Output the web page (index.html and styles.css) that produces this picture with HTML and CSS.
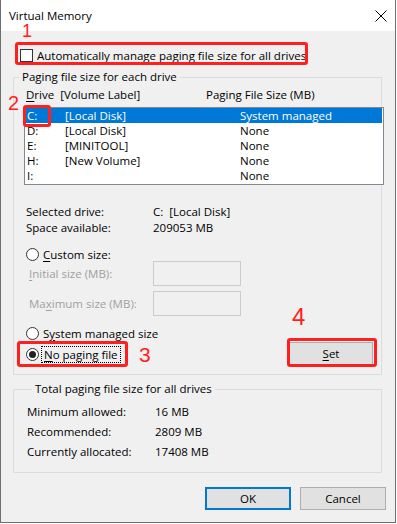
FILE: index.html
```html
<!DOCTYPE html>
<html lang="en">
  <head>
    <meta charset="UTF-8" />
    <title>Virtual Memory</title>
    <link rel="stylesheet" href="styles.css">
  </head>
  <body>
    <div class="window">
      <header class="titlebar">
        <span class="title-text">Virtual Memory</span>
        <svg class="close" width="12" height="12" viewBox="0 0 12 12">
          <path d="M0.5 0.5 L11.5 11.5 M11.5 0.5 L0.5 11.5" stroke="#000" stroke-width="1" fill="none" />
        </svg>
      </header>

      <div class="content">
        <div class="check-row">
          <span class="checkbox"></span>
          <span><u>A</u>utomatically manage paging file size for all drives</span>
        </div>

        <fieldset class="group drives">
          <legend>Paging file size for each drive</legend>
          <div class="list-head">
            <span class="head-drive"><u>D</u>rive&nbsp; [Volume Label]</span>
            <span>Paging File Size (MB)</span>
          </div>
          <div class="listbox">
            <div class="row selected"><span class="c1">C:</span><span class="c2">[Local Disk]</span><span>System managed</span></div>
            <div class="row"><span class="c1">D:</span><span class="c2">[Local Disk]</span><span>None</span></div>
            <div class="row"><span class="c1">E:</span><span class="c2">[MINITOOL]</span><span>None</span></div>
            <div class="row"><span class="c1">H:</span><span class="c2">[New Volume]</span><span>None</span></div>
            <div class="row"><span class="c1">I:</span><span class="c2"></span><span>None</span></div>
          </div>

          <div class="info">
            <div class="info-row"><span class="info-label">Selected drive:</span><span>C:&nbsp; [Local Disk]</span></div>
            <div class="info-row"><span class="info-label">Space available:</span><span>209053 MB</span></div>
          </div>

          <div class="radio-row custom">
            <span class="radio"></span>
            <span><u>C</u>ustom size:</span>
          </div>
          <div class="field-row">
            <span class="field-label"><u>I</u>nitial size (MB):</span>
            <span class="textbox"></span>
          </div>
          <div class="field-row second">
            <span class="field-label">Ma<u>x</u>imum size (MB):</span>
            <span class="textbox"></span>
          </div>

          <div class="radio-row system">
            <span class="radio"></span>
            <span>S<u>y</u>stem managed size</span>
          </div>
          <div class="bottom-row">
            <div class="radio-row">
              <span class="radio checked"></span>
              <span class="focus"><u>N</u>o paging file</span>
            </div>
            <button class="btn set"><u>S</u>et</button>
          </div>
        </fieldset>

        <fieldset class="group total">
          <legend>Total paging file size for all drives</legend>
          <div class="total-row"><span class="total-label">Minimum allowed:</span><span>16 MB</span></div>
          <div class="total-row"><span class="total-label">Recommended:</span><span>2809 MB</span></div>
          <div class="total-row"><span class="total-label">Currently allocated:</span><span>17408 MB</span></div>
        </fieldset>

        <div class="actions">
          <button class="btn ok">OK</button>
          <button class="btn">Cancel</button>
        </div>
      </div>

      <!-- annotations drawn over the dialog -->
      <span class="mark mark-1">1</span>
      <span class="mark mark-2">2</span>
      <span class="mark mark-3">3</span>
      <span class="mark mark-4">4</span>
      <div class="hl hl-1"></div>
      <div class="hl hl-2"></div>
      <div class="hl hl-3"></div>
      <div class="hl hl-4"></div>
    </div>
  </body>
</html>
```

FILE: styles.css
```css
* {
  margin: 0;
  padding: 0;
  box-sizing: border-box;
}
body {
  background: #fff;
  font-family: 'Open Sans', 'Noto Sans', sans-serif;
  font-size: 11.5px;
  color: #000;
}
u {
  text-decoration: underline;
  text-underline-offset: 2px;
}
.window {
  position: relative;
  width: 396px;
  height: 523px;
  border: 1px solid #6e6e6e;
  border-top: none;
  background: #f0f0f0;
  display: flex;
  flex-direction: column;
}
.titlebar {
  height: 31px;
  background: #fff;
  display: flex;
  align-items: center;
  justify-content: space-between;
  padding: 0 8px 1px 8px;
}
.title-text {
  line-height: 13px;
}
.close {
  display: block;
  margin-top: 1px;
}
.content {
  flex: 1;
}

/* checkbox line */
.check-row {
  margin: 18px 0 0 19px;
  height: 13px;
  display: flex;
  align-items: center;
  gap: 4px;
}
.checkbox {
  width: 13px;
  height: 13px;
  border: 1px solid #333;
  background: #fff;
}

/* group boxes */
.group {
  width: 369px;
  margin-left: 12px;
  border: 1px solid #dcdcdc;
  min-width: 0;
}
.group legend {
  margin-left: 5px;
  padding: 0 3px;
  line-height: 14px;
}
.drives {
  margin-top: 8px;
  padding-bottom: 9px;
}
.list-head {
  margin-top: 4px;
  padding-left: 12px;
  height: 14px;
  line-height: 14px;
  display: flex;
}
.head-drive {
  width: 180px;
}
.listbox {
  margin: 5px 0 0 10px;
  width: 360px;
  height: 78px;
  border: 1px solid #828790;
  background: #fff;
}
.row {
  height: 15px;
  line-height: 15px;
  padding-left: 2px;
  margin-right: 1px;
  display: flex;
}
.row.selected {
  background: #0078d7;
  color: #fff;
}
.c1 { width: 38px; }
.c2 { width: 175px; }

.info {
  margin-top: 19px;
  padding-left: 12px;
}
.info-row {
  height: 16px;
  line-height: 16px;
  display: flex;
}
.info-label {
  width: 127px;
}

/* radio buttons */
.radio-row {
  height: 14px;
  display: flex;
  align-items: center;
  gap: 4px;
}
.radio-row.custom {
  margin: 11px 0 0 12px;
}
.radio-row.system {
  margin: 10px 0 0 12px;
}
.radio {
  width: 13px;
  height: 13px;
  border: 1px solid #333;
  border-radius: 50%;
  background: #fff;
  display: flex;
  align-items: center;
  justify-content: center;
}
.radio.checked::after {
  content: '';
  width: 7px;
  height: 7px;
  border-radius: 50%;
  background: #222;
}
.focus {
  outline: 1px dotted #000;
  outline-offset: 1px;
  padding: 0 1px;
  line-height: 13px;
}

.field-row {
  height: 25px;
  display: flex;
  align-items: center;
  padding-left: 15px;
  color: #a0a0a0;
}
.field-row.second {
  margin-top: 5px;
}
.field-label {
  width: 124px;
}
.textbox {
  width: 88px;
  height: 25px;
  border: 1px solid #cccccc;
  background: #f0f0f0;
}

.bottom-row {
  margin: 2px 8px 0 12px;
  height: 23px;
  display: flex;
  align-items: center;
  justify-content: space-between;
}
.bottom-row .radio-row {
  margin-top: 2px;
}

/* buttons */
.btn {
  height: 23px;
  background: #e1e1e1;
  border: 1px solid #adadad;
  font-family: inherit;
  font-size: 11.5px;
  color: #000;
}
.btn.set {
  width: 84px;
}
.btn.ok {
  border: 2px solid #0078d7;
}

.total {
  margin-top: 7px;
  padding: 6px 0 10px 13px;
}
.total-row {
  height: 20px;
  line-height: 20px;
  display: flex;
}
.total-label {
  width: 128px;
}

.actions {
  margin: 14px 9px 0 0;
  display: flex;
  justify-content: flex-end;
  gap: 9px;
}
.actions .btn {
  width: 86px;
}

/* red annotations */
.mark {
  position: absolute;
  color: #ff1f1f;
  font-family: 'Liberation Sans', sans-serif;
  line-height: 0.75;
}
.mark-1 { left: 21px; top: 25px; font-size: 18px; }
.mark-2 { left: 7px; top: 96px; font-size: 20px; }
.mark-3 { left: 138px; top: 347px; font-size: 21px; }
.mark-4 { left: 291px; top: 308px; font-size: 24px; }
.hl {
  position: absolute;
  border: 3px solid #ff1f1f;
  border-radius: 3px;
}
.hl-1 { left: 14px; top: 42px; width: 293px; height: 23px; }
.hl-2 { left: 22px; top: 105px; width: 28px; height: 22px; }
.hl-3 { left: 16px; top: 341px; width: 111px; height: 26px; }
.hl-4 { left: 286px; top: 338px; width: 90px; height: 29px; }
```
